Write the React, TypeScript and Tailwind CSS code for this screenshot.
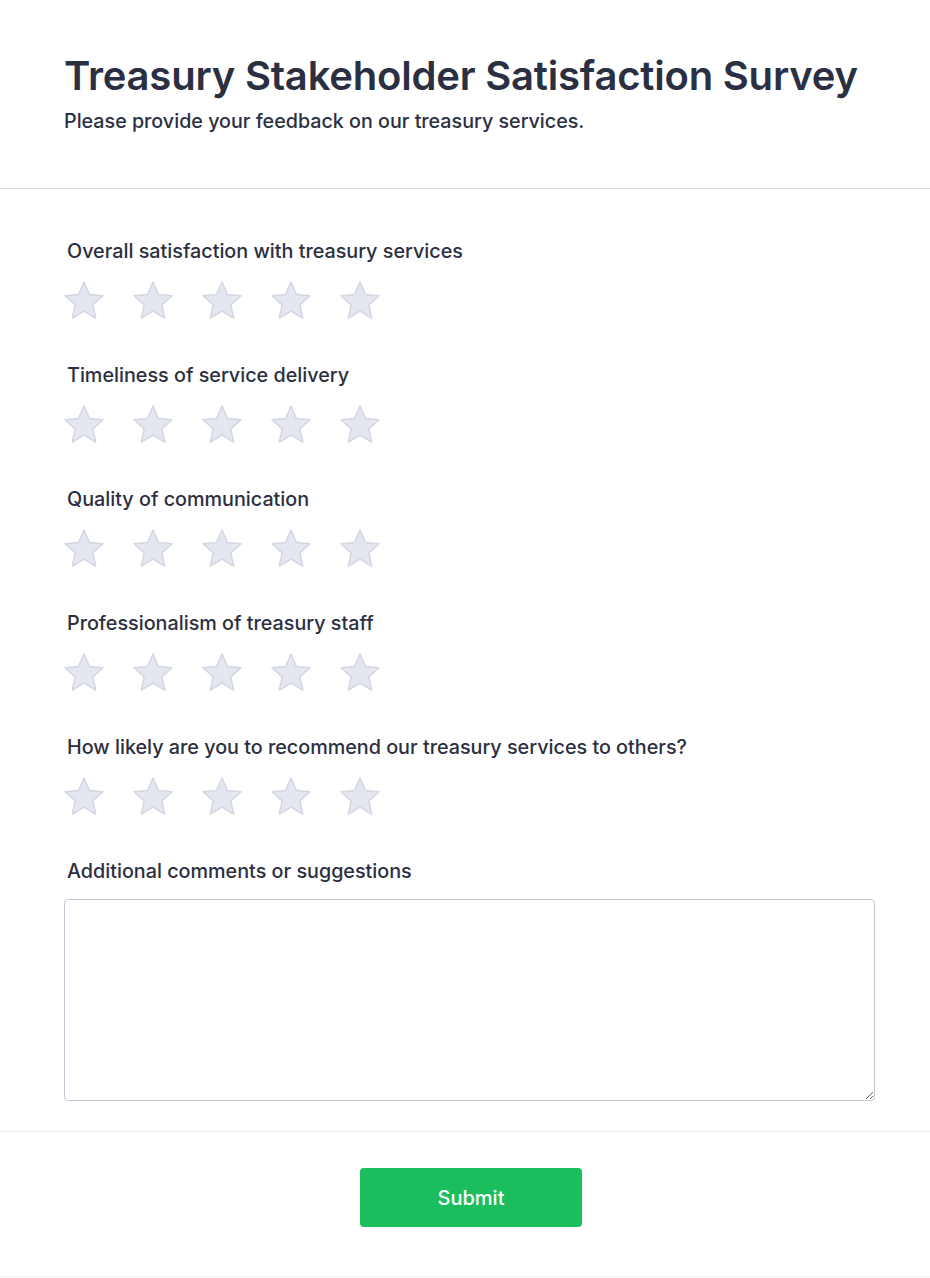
import { useState } from 'react';

const QUESTIONS = [
  'Overall satisfaction with treasury services',
  'Timeliness of service delivery',
  'Quality of communication',
  'Professionalism of treasury staff',
  'How likely are you to recommend our treasury services to others?',
];

function StarIcon({ active }: { active: boolean }) {
  return (
    <svg viewBox="2.3 2 19.4 18.5" className="w-[40px] h-[38px]" aria-hidden="true">
      <path
        d="M12 2.5L14.645 8.56L21.225 9.2L16.28 13.59L17.7 20.05L12 16.7L6.3 20.05L7.72 13.59L2.775 9.2L9.355 8.56Z"
        fill={active ? '#facc15' : '#e5e7f0'}
        stroke={active ? '#eab308' : '#d3d6e3'}
        strokeWidth="0.75"
        strokeLinejoin="round"
      />
    </svg>
  );
}

function Rating({ label }: { label: string }) {
  const [value, setValue] = useState(0);
  return (
    <div className="flex flex-col">
      <p className="pl-[3px] text-[19.75px] font-medium text-[#2b2f3f] leading-7">{label}</p>
      <div className="mt-[16px] flex gap-[29px]">
        {[1, 2, 3, 4, 5].map((n) => (
          <button key={n} type="button" onClick={() => setValue(n)} aria-label={`${n} star`}>
            <StarIcon active={n <= value} />
          </button>
        ))}
      </div>
    </div>
  );
}

export default function App() {
  return (
    <div className="w-[930px] min-h-screen overflow-x-hidden bg-white font-['Inter',sans-serif]">
      <div className="w-[940px] bg-white border-b border-[#f0f0f4]">
        {/* HEADER */}
        <div className="px-16 pt-[52px] pb-[53px] border-b border-[#dcdce9]">
          <h1 className="text-[40px] leading-[48px] font-semibold text-[#2b2f42] tracking-[-0.2px]">
            Treasury Stakeholder Satisfaction Survey
          </h1>
          <p className="mt-[7px] text-[19.7px] font-medium text-[#2b2f42] leading-7">
            Please provide your feedback on our treasury services.
          </p>
        </div>

        {/* QUESTIONS */}
        <div className="px-16 pt-[48px] pb-[30px] flex flex-col gap-[42px]">
          {QUESTIONS.map((q) => (
            <Rating key={q} label={q} />
          ))}

          <div className="flex flex-col">
            <label className="pl-[3px] text-[19.75px] font-medium text-[#2b2f3f] leading-7">
              Additional comments or suggestions
            </label>
            <textarea className="mt-[14px] h-[202px] w-[811px] rounded border border-[#c3c4d4] p-3 text-base text-[#2b2f42] outline-none" />
          </div>
        </div>

        {/* FOOTER */}
        <div className="border-t border-[#e9e9f0] pt-[36px] pb-[49px] pl-[2px] flex justify-center">
          <button
            type="button"
            className="w-[222px] h-[59px] rounded bg-[#1abe5d] text-xl font-medium text-white"
          >
            Submit
          </button>
        </div>
      </div>
    </div>
  );
}
